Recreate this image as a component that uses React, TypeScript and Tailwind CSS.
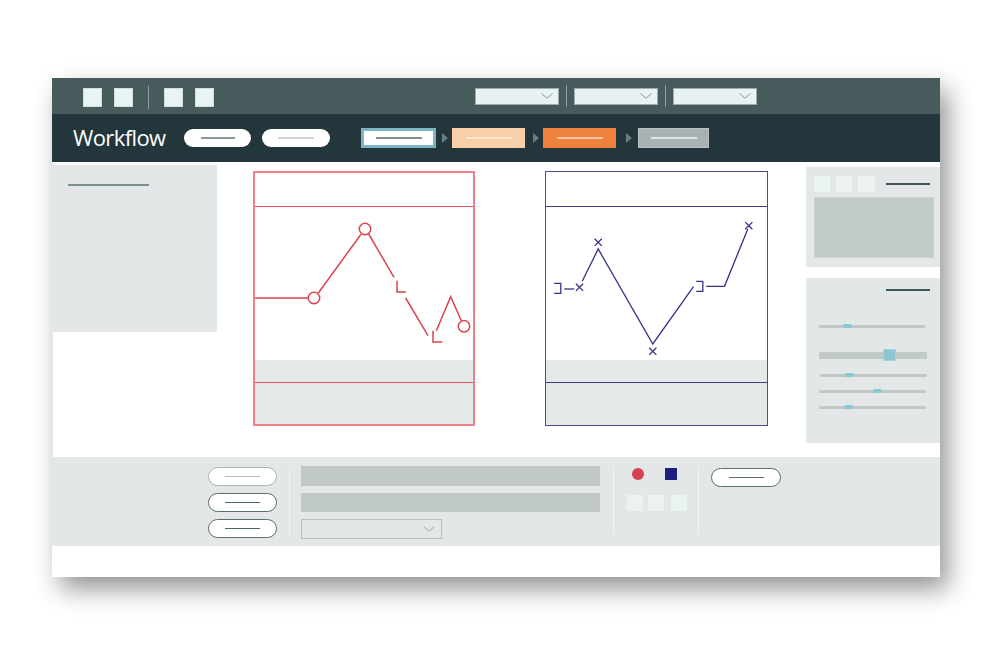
import React from 'react';

const Chevron = ({ color = '#8a9999' }: { color?: string }) => (
  <svg width="12" height="6" viewBox="0 0 12 6" className="block">
    <path d="M0.5 0.5 L6 5.2 L11.5 0.5" fill="none" stroke={color} strokeWidth="1" />
  </svg>
);

const Sq = ({ className = '' }: { className?: string }) => (
  <div className={`w-[19px] h-[19px] shrink-0 bg-[#e8f3f3] border border-[#cfdede] ${className}`} />
);

const Dropdown = ({ className = '' }: { className?: string }) => (
  <div className={`w-[84px] h-[17px] shrink-0 bg-[#e8f2f2] border border-[#9cadad] flex items-center justify-end pr-[5px] ${className}`}>
    <Chevron />
  </div>
);

const Arrow = () => (
  <svg width="6" height="10" viewBox="0 0 6 10" className="block">
    <path d="M0 0 L6 5 L0 10 Z" fill="#6b7e80" />
  </svg>
);

const XMark = ({ x, y }: { x: number; y: number }) => (
  <path d={`M${x - 3.6} ${y - 3.6} L${x + 3.6} ${y + 3.6} M${x + 3.6} ${y - 3.6} L${x - 3.6} ${y + 3.6}`} />
);

function RedChart() {
  return (
    <div className="mt-[9px] ml-[36px] w-[222px] h-[255px] shrink-0 border-2 border-[#f07f88] flex flex-col">
      <div className="h-[34px] border-b-[1.5px] border-[#e0535e]" />
      <svg width="218" height="153" viewBox="255 208 218 153" className="block overflow-visible">
        <g fill="none" stroke="#d9444f" strokeWidth="1.5">
          <path d="M255 299 H308.5" />
          <circle cx="314" cy="299" r="5.7" fill="#fff" />
          <path d="M318.3 294 L361 235.3" />
          <circle cx="365" cy="230" r="5.7" fill="#fff" />
          <path d="M368.7 235 L394 278.3" />
          <path d="M397 281.7 V293 H406" />
          <path d="M405.7 299 L428 336.7" />
          <path d="M433 331.7 V343 H442.3" />
          <path d="M436.3 331.7 L450.7 297.7 L461.3 321.7" />
          <circle cx="464" cy="327.3" r="5.7" fill="#fff" />
        </g>
      </svg>
      <div className="h-[23px] bg-[#e4e8e8] border-b-[1.5px] border-[#e0535e]" />
      <div className="flex-1 bg-[#e4e8e8]" />
    </div>
  );
}

function BlueChart() {
  return (
    <div className="mt-[9px] ml-[70px] w-[223px] h-[255px] shrink-0 border-[1.5px] border-[#4b4b98] flex flex-col">
      <div className="h-[34.5px] border-b-[1.5px] border-[#3b3b8c]" />
      <svg width="220" height="153" viewBox="546.5 208 220 153" className="block overflow-visible">
        <g fill="none" stroke="#32328a" strokeWidth="1.3">
          <path d="M554.7 284.3 H561.3 V294.3 H554.7" />
          <path d="M564.7 290 H574.7" />
          <XMark x={580} y={288.3} />
          <path d="M582.7 282.3 L598.7 250 L653.3 345 L694 287.7" />
          <XMark x={598.7} y={243.3} />
          <XMark x={653.3} y={352.3} />
          <path d="M696.7 282.3 H703.3 V292.3 H696.7" />
          <path d="M706.7 287.3 H725 L748.3 230" />
          <XMark x={749.3} y={226.7} />
        </g>
      </svg>
      <div className="h-[23px] bg-[#e4e8e8] border-b-[1.5px] border-[#3b3b8c]" />
      <div className="flex-1 bg-[#e4e8e8]" />
    </div>
  );
}

const Slider = ({ thumb, className = '' }: { thumb: number; className?: string }) => (
  <div className={`relative h-[3px] bg-[#c1c8c8] rounded-full ${className}`}>
    <div className="absolute top-[-0.5px] h-[4px] w-[9px] rounded-full bg-[#8cc6ce]" style={{ left: thumb }} />
  </div>
);

const Pill = ({ w, border, line, lineW }: { w: number; border: string; line: string; lineW: number }) => (
  <div
    className="h-[19px] shrink-0 bg-white rounded-full border flex items-center justify-center"
    style={{ width: w, borderColor: border }}
  >
    <div className="h-[1.5px]" style={{ width: lineW, background: line }} />
  </div>
);

export default function App() {
  return (
    <div className="w-[992px] h-[656px] bg-white overflow-hidden" style={{ fontFamily: '"Open Sans", "Liberation Sans", sans-serif' }}>
      <div className="ml-[52px] pt-[78px]">
        <div className="w-[888px] h-[499px] bg-white shadow-[8px_12px_24px_rgba(0,0,0,0.42)] flex flex-col">
          {/* toolbar */}
          <div className="h-[36px] shrink-0 bg-[#475b5d] flex items-center">
            <div className="flex items-center mt-[3px] ml-[31px]">
              <Sq />
              <Sq className="ml-[12px]" />
              <div className="w-px h-[23px] bg-[#8ea1a1] ml-[15px] -mt-[1px]" />
              <Sq className="ml-[15px]" />
              <Sq className="ml-[12px]" />
            </div>
            <Dropdown className="ml-[261px]" />
            <div className="w-px h-[22px] bg-[#8ea1a1] ml-[7px]" />
            <Dropdown className="ml-[7px]" />
            <div className="w-px h-[22px] bg-[#8ea1a1] ml-[7px]" />
            <Dropdown className="ml-[7px]" />
          </div>

          {/* header */}
          <div className="h-[48px] shrink-0 bg-[#22363b] flex items-center">
            <span className="w-[132px] shrink-0 pl-[21px] text-white text-[22px] leading-none tracking-[-0.6px] -mt-[2px]">Workflow</span>
            <div className="w-[67px] h-[18px] shrink-0 rounded-full bg-white flex items-center justify-center">
              <div className="w-[34px] h-[2px] bg-[#8a9a9a]" />
            </div>
            <div className="w-[68px] h-[18px] shrink-0 rounded-full bg-white flex items-center justify-center ml-[11px]">
              <div className="w-[36px] h-[2px] bg-[#cdd4d4]" />
            </div>
            <div className="ml-[31px] w-[75px] h-[20px] shrink-0 bg-white border-[3px] border-[#7db5c0] flex items-center justify-center">
              <div className="w-[46px] h-[2px] bg-[#7f8f8f]" />
            </div>
            <div className="ml-[6px]"><Arrow /></div>
            <div className="ml-[4px] w-[73px] h-[20px] shrink-0 bg-[#f9cfa9] flex items-center justify-center">
              <div className="w-[46px] h-[2px] bg-[#fde6d2]" />
            </div>
            <div className="ml-[8px]"><Arrow /></div>
            <div className="ml-[4px] w-[73px] h-[20px] shrink-0 bg-[#f0823f] flex items-center justify-center">
              <div className="w-[46px] h-[2px] bg-[#f9c4a1]" />
            </div>
            <div className="ml-[10px]"><Arrow /></div>
            <div className="ml-[6px] w-[71px] h-[20px] shrink-0 bg-[#a9b1b2] border border-[#b9c1c1] flex items-center justify-center">
              <div className="w-[46px] h-[2px] bg-[#dfe4e4]" />
            </div>
          </div>

          {/* content */}
          <div className="h-[295px] shrink-0 flex items-start border-l border-[#e6e9e9]">
            <div className="mt-[3px] w-[164px] h-[167px] shrink-0 bg-[#e3e7e7] pt-[19px] pl-[15px]">
              <div className="w-[81px] h-[2px] bg-[#7d8f8f]" />
            </div>
            <RedChart />
            <BlueChart />
            <div className="ml-[38px] w-[134px] shrink-0 flex flex-col">
              <div className="mt-[5px] h-[100px] bg-[#e3e7e7] px-[8px] pt-[9px]">
                <div className="flex items-center">
                  <div className="w-[16px] h-[16px] bg-[#eaf2f2]" />
                  <div className="w-[16px] h-[16px] bg-[#eaf2f2] ml-[6px]" />
                  <div className="w-[17px] h-[16px] bg-[#eaf2f2] ml-[6px]" />
                  <div className="w-[44px] h-[1.5px] bg-[#3e5656] ml-[11px]" />
                </div>
                <div className="mt-[5px] w-[120px] h-[61px] bg-[#c2c9c9] border border-[#ccd3d3]" />
              </div>
              <div className="mt-[11px] h-[165px] bg-[#e3e7e7] pt-[11px]">
                <div className="ml-[80px] w-[44px] h-[1.5px] bg-[#3e5656]" />
                <Slider thumb={24} className="mt-[34px] ml-[13px] w-[106px]" />
                <div className="relative mt-[24px] ml-[13px] w-[108px] h-[7px] bg-[#c1c8c8]">
                  <div className="absolute left-[64px] -top-[2.5px] w-[13px] h-[12px] bg-[#8cc6ce] border border-[#a6d3d8]" />
                </div>
                <Slider thumb={25} className="mt-[15px] ml-[14px] w-[107px]" />
                <Slider thumb={54} className="mt-[13px] ml-[13px] w-[107px]" />
                <Slider thumb={25} className="mt-[13px] ml-[13px] w-[107px]" />
              </div>
            </div>
          </div>

          {/* bottom bar */}
          <div className="h-[89px] shrink-0 bg-[#e3e7e7] flex items-start">
            <div className="ml-[156px] mt-[10px] flex flex-col gap-[7px]">
              <Pill w={69} border="#a9b5b5" line="#b3bfbf" lineW={35} />
              <Pill w={69} border="#5a6e6e" line="#4f6464" lineW={35} />
              <Pill w={69} border="#5a6e6e" line="#4f6464" lineW={35} />
            </div>
            <div className="ml-[12px] mt-[14px] w-px h-[65px] bg-[#f3f6f6]" />
            <div className="ml-[11px] mt-[9px] flex flex-col">
              <div className="w-[299px] h-[20px] bg-[#c1c8c8]" />
              <div className="mt-[7px] w-[299px] h-[19px] bg-[#c1c8c8]" />
              <div className="mt-[7px] w-[141px] h-[20px] border border-[#b6bfbf] flex items-center justify-end pr-[6px]">
                <Chevron color="#9aa8a8" />
              </div>
            </div>
            <div className="ml-[13px] mt-[11px] w-px h-[65px] bg-[#f3f6f6]" />
            <div className="ml-[13px] mt-[11px] flex flex-col">
              <div className="flex items-center h-[12px]">
                <div className="ml-[5px] w-[12px] h-[12px] rounded-full bg-[#d5414e]" />
                <div className="ml-[21px] w-[12px] h-[12px] bg-[#1e1e80]" />
              </div>
              <div className="mt-[15px] flex">
                <div className="w-[16px] h-[16px] bg-[#eaf2f2]" />
                <div className="ml-[5px] w-[16px] h-[16px] bg-[#eaf2f2]" />
                <div className="ml-[7px] w-[16px] h-[16px] bg-[#eaf2f2]" />
              </div>
            </div>
            <div className="ml-[11px] mt-[11px] w-px h-[65px] bg-[#f3f6f6]" />
            <div className="ml-[12px] mt-[11px]">
              <Pill w={70} border="#5a6e6e" line="#5a6e6e" lineW={35} />
            </div>
          </div>

          {/* footer */}
          <div className="flex-1 bg-white" />
        </div>
      </div>
    </div>
  );
}
